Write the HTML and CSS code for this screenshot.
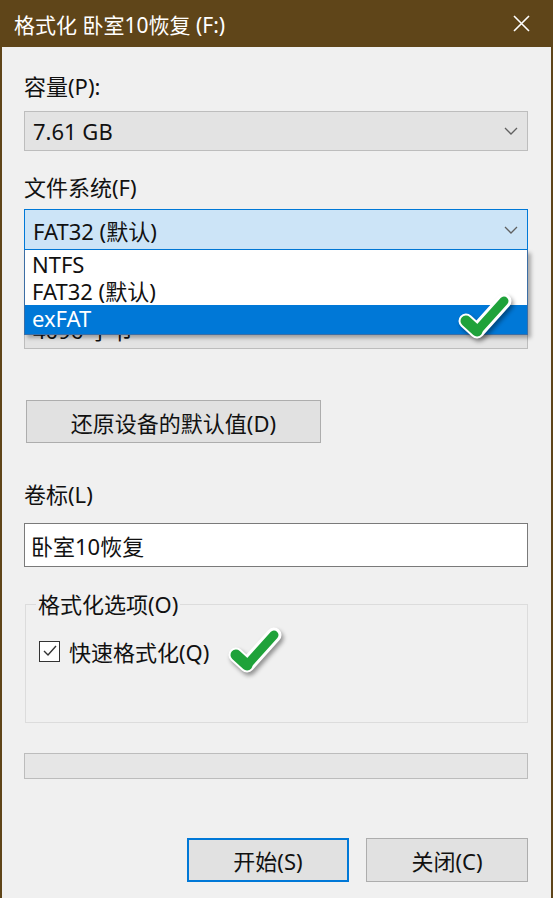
FILE: index.html
```html
<!DOCTYPE html>
<html lang="zh-CN">
<head>
    <meta charset="UTF-8">
    <meta name="viewport" content="width=device-width, initial-scale=1.0">
    <title>格式化 卧室10恢复 (F:)</title>
    <link rel="stylesheet" href="styles.css">
</head>
<body>
    <div class="dialog">
        <div class="titlebar">
            <span class="title">格式化 卧室10恢复 (F:)</span>
            <svg class="close" width="17" height="17" viewBox="0 0 17 17">
                <path d="M1 1 L16 16 M16 1 L1 16" stroke="#fff" stroke-width="1.6" fill="none"/>
            </svg>
        </div>

        <div class="content">
            <div class="field-label">容量(P):</div>
            <div class="combo combo-disabled">
                <span>7.61 GB</span>
                <svg class="chevron" width="14" height="8" viewBox="0 0 14 8"><path d="M1 1 L7 7 L13 1" stroke="#606060" stroke-width="1.3" fill="none"/></svg>
            </div>

            <div class="field-label label-fs">文件系统(F)</div>
            <div class="fs-wrap">
                <div class="combo combo-open">
                    <span>FAT32 (默认)</span>
                    <svg class="chevron" width="14" height="8" viewBox="0 0 14 8"><path d="M1 1 L7 7 L13 1" stroke="#606060" stroke-width="1.3" fill="none"/></svg>
                </div>
                <!-- covered by the open list -->
                <div class="field-label label-cluster">分配单元大小(A)</div>
                <div class="combo combo-disabled combo-cluster">
                    <span>4096 字节</span>
                </div>

                <ul class="dropdown">
                    <li>NTFS</li>
                    <li>FAT32 (默认)</li>
                    <li class="selected">exFAT</li>
                </ul>
                <svg class="mark mark-list" width="56" height="50" viewBox="0 0 56 50">
                    <path d="M9 29 L20 39 L47 9" stroke="#fff" stroke-width="15" stroke-linecap="round" stroke-linejoin="round" fill="none"/>
                    <path d="M9 29 L20 39" stroke="#1fa23a" stroke-width="11" stroke-linecap="round" fill="none"/>
                    <path d="M20 39 L47 9" stroke="#1fa23a" stroke-width="9" stroke-linecap="round" fill="none"/>
                </svg>
            </div>

            <button class="btn btn-restore">还原设备的默认值(D)</button>

            <div class="field-label label-volume">卷标(L)</div>
            <div class="textbox">卧室10恢复</div>

            <fieldset class="group">
                <legend>格式化选项(O)</legend>
                <div class="check-row">
                    <span class="checkbox">
                        <svg width="14" height="12" viewBox="0 0 14 12"><path d="M1 6 L5 10 L13 1" stroke="#333" stroke-width="1.4" fill="none"/></svg>
                    </span>
                    <span>快速格式化(Q)</span>
                    <svg class="mark mark-quick" width="56" height="50" viewBox="0 0 56 50">
                        <path d="M9 29 L20 39 L47 9" stroke="#fff" stroke-width="15" stroke-linecap="round" stroke-linejoin="round" fill="none"/>
                        <path d="M9 29 L20 39" stroke="#1fa23a" stroke-width="11" stroke-linecap="round" fill="none"/>
                        <path d="M20 39 L47 9" stroke="#1fa23a" stroke-width="9" stroke-linecap="round" fill="none"/>
                    </svg>
                </div>
            </fieldset>

            <div class="progress"></div>

            <div class="actions">
                <button class="btn btn-primary">开始(S)</button>
                <button class="btn">关闭(C)</button>
            </div>
        </div>
    </div>
</body>
</html>
```

FILE: styles.css
```css
body {
    margin: 0;
    font-family: "Noto Sans", "Noto Sans CJK SC", sans-serif;
    font-size: 22px;
    color: #111;
    background-color: #f0f0f0;
}
.dialog {
    height: 898px;
    box-sizing: border-box;
    padding: 0 2px;
    background-color: #5f4519;
    display: flex;
    flex-direction: column;
}
.titlebar {
    height: 47px;
    flex-shrink: 0;
    display: flex;
    align-items: center;
    justify-content: space-between;
    padding: 0 21px 0 12px;
    color: #fff;
    font-size: 21px;
}
.content {
    flex: 1;
    background-color: #f0f0f0;
    padding: 26px 23px 0 22px;
    display: flex;
    flex-direction: column;
}
.field-label {
    line-height: 26px;
    height: 26px;
}
.label-fs {
    margin-top: 23px;
}
.label-cluster {
    margin-top: 17px;
    visibility: hidden;
}
.label-volume {
    margin-top: 38px;
}
.combo {
    box-sizing: border-box;
    height: 40px;
    margin-top: 12px;
    padding: 0 8px;
    display: flex;
    align-items: center;
    justify-content: space-between;
    border: 1px solid #bdbdbd;
}
.combo-disabled {
    background-color: #e3e3e3;
}
.combo-open {
    height: 41px;
    margin-top: 9px;
    background-color: #cce4f7;
    border-color: #0078d7;
}
.combo-cluster {
    margin-top: 16px;
}
.chevron {
    margin-right: 1px;
}
.fs-wrap {
    position: relative;
}
.dropdown {
    position: absolute;
    top: 50px;
    left: 0;
    right: 0;
    margin: 0;
    padding: 0;
    list-style: none;
    background-color: #fff;
    border: 1px solid #3c6ea5;
    border-top: none;
    box-shadow: 3px 3px 4px rgba(0, 0, 0, 0.3);
}
.dropdown li {
    height: 27px;
    line-height: 27px;
    padding-left: 7px;
}
.dropdown li:first-child {
    margin-top: 1px;
}
.dropdown li.selected {
    height: 29px;
    background-color: #0078d7;
    color: #fff;
}
.mark {
    filter: drop-shadow(2px 3px 2px rgba(0, 0, 0, 0.4));
}
.mark-list {
    position: absolute;
    top: 92px;
    left: 433px;
}
.btn {
    box-sizing: border-box;
    height: 44px;
    font-family: inherit;
    font-size: 22px;
    color: #111;
    background-color: #e1e1e1;
    border: 1px solid #adadad;
    padding: 0;
}
.btn-restore {
    width: 295px;
    margin: 51px 0 0 2px;
    height: 43px;
}
.textbox {
    box-sizing: border-box;
    height: 44px;
    margin-top: 16px;
    padding: 0 6px;
    display: flex;
    align-items: center;
    background-color: #fff;
    border: 1px solid #7a7a7a;
}
.group {
    box-sizing: border-box;
    height: 132px;
    margin: 24px 0 0 1px;
    padding: 0 13px;
    border: 1px solid #dcdcdc;
}
.group legend {
    line-height: 26px;
    margin-left: -3px;
    padding: 0 2px;
}
.check-row {
    height: 26px;
    margin-top: 21px;
    display: flex;
    align-items: center;
    gap: 9px;
}
.checkbox {
    box-sizing: border-box;
    width: 21px;
    height: 21px;
    display: flex;
    align-items: center;
    justify-content: center;
    background-color: #fff;
    border: 1px solid #333;
}
.mark-quick {
    margin-left: 9px;
}
.progress {
    height: 26px;
    box-sizing: border-box;
    margin-top: 30px;
    background-color: #e6e6e6;
    border: 1px solid #bcbcbc;
}
.actions {
    margin-top: 59px;
    display: flex;
    justify-content: flex-end;
    gap: 17px;
}
.actions .btn {
    width: 162px;
}
.btn-primary {
    border: 2px solid #0078d7;
}
```
